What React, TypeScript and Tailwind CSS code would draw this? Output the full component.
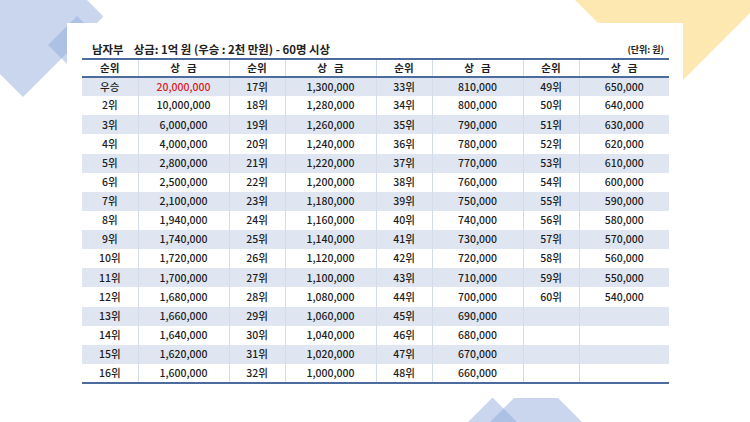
import React from "react";

const font = { fontFamily: '"Noto Sans CJK KR", "Noto Sans", sans-serif' };

const widths = ["w-[56px]", "w-[91px]", "w-[56px]", "w-[91px]", "w-[56px]", "w-[91px]", "w-[56px]", "w-[90px]"];

const won = (n: number) => n.toLocaleString("en-US");

const firstCol = [
  20000000, 10000000, 6000000, 4000000, 2800000, 2500000, 2100000, 1940000,
  1740000, 1720000, 1700000, 1680000, 1660000, 1640000, 1620000, 1600000,
];

// 4 blocks of 16 ranks, 60 prizes in total
const rows = Array.from({ length: 16 }, (_, i) => {
  const cells: { rank: string; prize: string }[] = [];
  cells.push({ rank: i === 0 ? "우승" : `${i + 1}위`, prize: won(firstCol[i]) });
  cells.push({ rank: `${i + 17}위`, prize: won(1300000 - i * 20000) });
  cells.push({ rank: `${i + 33}위`, prize: won(810000 - i * 10000) });
  cells.push(i < 12 ? { rank: `${i + 49}위`, prize: won(650000 - i * 10000) } : { rank: "", prize: "" });
  return cells;
});

function Decor() {
  return (
    <svg className="absolute inset-0" width="750" height="422" viewBox="0 0 750 422">
      <g fill="#8faadc" fillOpacity="0.48">
        <polygon points="103.5,16.5 23,97 -60,14 20,-67" />
        <polygon points="48,45 77,16 106,45 77,74" />
        <polygon points="492.5,397.5 560,465 492.5,532 425,465" />
        <polygon points="536,376 610,450 536,524 462,450" />
      </g>
      <polygon points="475,-100 863,-100 669,94" fill="#fee8b1" />
    </svg>
  );
}

export default function App() {
  return (
    <div className="relative w-[750px] h-[422px] overflow-hidden bg-white" style={font}>
      <Decor />
      <div className="relative ml-[67px] mt-[23px] w-[616px] h-[375px] bg-white px-[15px] pt-[18px]">
        <div className="flex items-center justify-between h-[17px] pl-[10px] pr-[4px] text-[#222]">
          <span className="text-[11.4px] font-semibold whitespace-pre">남자부    상금: 1억 원 (우승 : 2천 만원) - 60명 시상</span>
          <span className="text-[9px] font-semibold">(단위: 원)</span>
        </div>
        <table className="border-collapse table-fixed w-[587px] text-[10.5px] font-medium text-[#1e1e1e] border-y-2 border-[#4b6c9c]">
          <thead>
            <tr className="h-[18px] border-b-2 border-[#4b6c9c]">
              {widths.map((w, k) => (
                <th key={k} className={`${w} p-0 font-semibold text-center border-l border-[#d3dcea] first:border-l-0`}>
                  {k % 2 === 0 ? "순위" : <span className="whitespace-pre">{"상   금"}</span>}
                </th>
              ))}
            </tr>
          </thead>
          <tbody>
            {rows.map((cells, i) => (
              <tr key={i} className={`h-[19.125px] ${i % 2 === 0 ? "bg-[#dfe6f2]" : "bg-white"}`}>
                {cells.map((c, j) => (
                  <React.Fragment key={j}>
                    <td className={`p-0 text-center leading-none border-[#d3dcea] ${j > 0 ? "border-l" : ""}`}>{c.rank}</td>
                    <td className={`p-0 text-center leading-none border-l border-[#d3dcea] ${i === 0 && j === 0 ? "text-[#e0201e]" : ""}`}>
                      {c.prize}
                    </td>
                  </React.Fragment>
                ))}
              </tr>
            ))}
          </tbody>
        </table>
      </div>
    </div>
  );
}
